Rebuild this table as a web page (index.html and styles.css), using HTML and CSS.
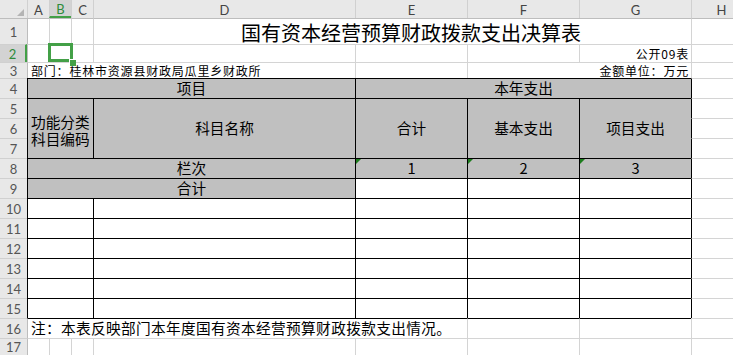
FILE: index.html
```html
<!DOCTYPE html>
<html lang="zh-CN">
<head>
<meta charset="utf-8">
<title>国有资本经营预算财政拨款支出决算表</title>
<link rel="stylesheet" href="styles.css">
</head>
<body>
<div class="sheet">
  <div class="corner"><svg width="27" height="18" viewBox="0 0 27 18"><polygon points="24,8 24,15 17,15" fill="#b4b4b4"/></svg></div>
  <div class="ch">A</div>
  <div class="ch sel">B</div>
  <div class="ch">C</div>
  <div class="ch">D</div>
  <div class="ch">E</div>
  <div class="ch">F</div>
  <div class="ch">G</div>
  <div class="ch">H</div>

  <div class="rh r1">1</div>
  <div class="c colA r1"></div>
  <div class="c r1"></div>
  <div class="c r1"></div>
  <div class="c r1 span4 title">国有资本经营预算财政拨款支出决算表</div>
  <div class="c r1"></div>

  <div class="rh sel">2</div>
  <div class="c colA"></div>
  <div class="c active"><span class="selbox"></span><span class="handle"></span></div>
  <div class="c"></div>
  <div class="c"></div>
  <div class="c"></div>
  <div class="c"></div>
  <div class="c small end">公开09表</div>
  <div class="c"></div>

  <div class="rh">3</div>
  <div class="c colA span4 small">部门：桂林市资源县财政局瓜里乡财政所</div>
  <div class="c"></div>
  <div class="c span2 small end">金额单位：万元</div>
  <div class="c"></div>

  <div class="rh">4</div>
  <div class="c span4 gray bl bt center">项目</div>
  <div class="c span3 gray bl bt center">本年支出</div>
  <div class="c bl"></div>

  <div class="rh">5</div>
  <div class="c span3 rows3 gray bl bt wrap">功能分类科目编码</div>
  <div class="c rows3 gray bl bt center">科目名称</div>
  <div class="c rows3 gray bl bt center">合计</div>
  <div class="c rows3 gray bl bt center">基本支出</div>
  <div class="c rows3 gray bl bt center">项目支出</div>
  <div class="c bl"></div>
  <div class="rh">6</div>
  <div class="c bl"></div>
  <div class="rh">7</div>
  <div class="c bl"></div>

  <div class="rh">8</div>
  <div class="c span4 gray bl bt center">栏次</div>
  <div class="c gray bl bt center tri">1</div>
  <div class="c gray bl bt center tri">2</div>
  <div class="c gray bl bt center tri">3</div>
  <div class="c bl"></div>

  <div class="rh">9</div>
  <div class="c span4 gray bl bt center">合计</div>
  <div class="c bl bt"></div>
  <div class="c bl bt"></div>
  <div class="c bl bt"></div>
  <div class="c bl"></div>

  <div class="rh">10</div>
  <div class="c span3 bl bt"></div><div class="c bl bt"></div><div class="c bl bt"></div><div class="c bl bt"></div><div class="c bl bt"></div><div class="c bl"></div>
  <div class="rh">11</div>
  <div class="c span3 bl bt"></div><div class="c bl bt"></div><div class="c bl bt"></div><div class="c bl bt"></div><div class="c bl bt"></div><div class="c bl"></div>
  <div class="rh">12</div>
  <div class="c span3 bl bt"></div><div class="c bl bt"></div><div class="c bl bt"></div><div class="c bl bt"></div><div class="c bl bt"></div><div class="c bl"></div>
  <div class="rh">13</div>
  <div class="c span3 bl bt"></div><div class="c bl bt"></div><div class="c bl bt"></div><div class="c bl bt"></div><div class="c bl bt"></div><div class="c bl"></div>
  <div class="rh">14</div>
  <div class="c span3 bl bt"></div><div class="c bl bt"></div><div class="c bl bt"></div><div class="c bl bt"></div><div class="c bl bt"></div><div class="c bl"></div>
  <div class="rh">15</div>
  <div class="c span3 bl bt"></div><div class="c bl bt"></div><div class="c bl bt"></div><div class="c bl bt"></div><div class="c bl bt"></div><div class="c bl"></div>

  <div class="rh">16</div>
  <div class="c colA span5 bt note">注：本表反映部门本年度国有资本经营预算财政拨款支出情况。</div>
  <div class="c bt"></div>
  <div class="c bt"></div>
  <div class="c"></div>

  <div class="rh">17</div>
  <div class="c colA"></div><div class="c"></div><div class="c"></div><div class="c"></div><div class="c"></div><div class="c"></div><div class="c"></div><div class="c"></div>
</div>
</body>
</html>
```
FILE: styles.css
```css
* { box-sizing: border-box; }
html, body { margin: 0; padding: 0; background: #fff; overflow: hidden; }

.sheet {
  display: grid;
  grid-template-columns: 27px 22px 22px 22px 262px 112px 112px 112px 60px;
  grid-template-rows: 18px 26px 18px 16px repeat(13, 20px);
  font-family: "Noto Sans CJK SC", sans-serif;
  color: #000;
}

.corner { background: #e8e8e8; }

.ch {
  background: #e8e8e8;
  border-left: 1px solid #d0d0d0;
  display: flex;
  align-items: center;
  justify-content: center;
  font: 13px Lato, "Liberation Sans", sans-serif;
  color: #444;
  padding-top: 1px;
}
.ch.sel { background: #d3d3d3; color: #2e8b3a; border-bottom: 2px solid #43a047; padding-top: 2px; }

.rh {
  background: #e8e8e8;
  border-top: 1px solid #d0d0d0;
  display: flex;
  align-items: center;
  justify-content: center;
  font: 13px Lato, "Liberation Sans", sans-serif;
  color: #555;
}
.rh.r1 { border-top-color: #bdbdbd; }
.rh.sel { background: #d3d3d3; color: #2e8b3a; border-right: 2px solid #43a047; }

.c {
  border-left: 1px solid #d4d4d4;
  border-top: 1px solid #d4d4d4;
  display: flex;
  align-items: center;
  min-width: 0;
  padding: 0 3px;
  font-size: 14.67px;
  line-height: 1;
  white-space: nowrap;
}
.c.colA { border-left-color: #bdbdbd; }
.c.r1 { border-top-color: #bdbdbd; }
.c.bl { border-left-color: #000; }
.c.bt { border-top-color: #000; }
.gray { background: #c0c0c0; }
.center { justify-content: center; }
.end { justify-content: flex-end; }
.small { font-size: 12px; letter-spacing: 0.8px; }
.small.end { padding-right: 2px; }
.note { letter-spacing: 0.35px; }

.span2 { grid-column: span 2; }
.span3 { grid-column: span 3; }
.span4 { grid-column: span 4; }
.span5 { grid-column: span 5; }
.rows3 { grid-row: span 3; }

.title {
  font-size: 20px;
  justify-content: center;
  padding-left: 40px;
  padding-top: 3px;
}

.wrap {
  white-space: normal;
  line-height: 17px;
  padding-top: 2px;
}

.active { position: relative; overflow: visible; }
.selbox {
  position: absolute;
  left: -2px;
  top: -2px;
  width: 25px;
  height: 19px;
  border: 3px solid #43a047;
  z-index: 2;
}
.handle {
  position: absolute;
  left: 19px;
  top: 14px;
  width: 7px;
  height: 7px;
  background: #43a047;
  border-left: 1px solid #fff;
  border-top: 1px solid #fff;
  z-index: 3;
}

.tri { position: relative; }
.tri::before {
  content: "";
  position: absolute;
  left: 0;
  top: 0;
  border-top: 5px solid #1d7d1d;
  border-right: 5px solid transparent;
}
```
